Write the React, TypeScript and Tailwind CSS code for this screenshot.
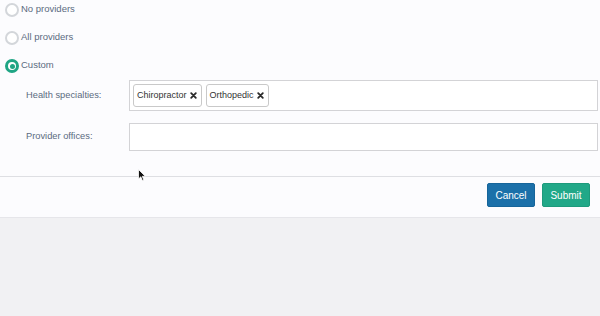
function Radio({ checked }: { checked?: boolean }) {
  return checked ? (
    <span className="w-[14px] h-[14px] rounded-full border-[3px] border-[#1fa584] flex items-center justify-center bg-white">
      <span className="w-[5px] h-[5px] rounded-full bg-[#1fa584]"></span>
    </span>
  ) : (
    <span className="w-[14px] h-[14px] rounded-full border-[2.5px] border-[#d3d6da] bg-white"></span>
  );
}

function Tag({ label }: { label: string }) {
  return (
    <span className="h-[23px] flex items-center gap-[3px] pl-[3px] pr-[4px] border border-[#c9c9c9] rounded-[3px] bg-white text-[#333] text-[9px]">
      {label}
      <svg width="7" height="7" viewBox="0 0 7 7">
        <path d="M1.2 1.2 L5.8 5.8 M5.8 1.2 L1.2 5.8" stroke="#2b2b2b" strokeWidth="1.8" strokeLinecap="round" />
      </svg>
    </span>
  );
}

export default function App() {
  const options = ["No providers", "All providers", "Custom"];
  return (
    <div className="w-[600px] h-[316px] bg-[#f1f1f3] relative overflow-hidden" style={{ fontFamily: '"Liberation Sans", Arial, sans-serif' }}>
      <div className="bg-[#fcfcfe]">
        <div className="flex flex-col gap-[8px] pl-[5px]">
          {options.map((o, i) => (
            <div key={o} className="h-[20px] flex items-center gap-[2px] text-[9.5px] text-[#5b6b7e]">
              <Radio checked={i === 2} />
              <span className="-mt-[2px]">{o}</span>
            </div>
          ))}
        </div>

        <div className="mt-[4px] flex items-center">
          <span className="w-[129px] pl-[26px] text-[9.3px] text-[#5b6b7e]">Health specialties:</span>
          <div className="w-[469px] h-[31px] border border-[#d3d3d6] bg-white flex items-center gap-[4px] px-[3px]">
            <Tag label="Chiropractor" />
            <Tag label="Orthopedic" />
          </div>
        </div>

        <div className="mt-[12px] flex items-center">
          <span className="w-[129px] pl-[26px] text-[9.3px] text-[#5b6b7e]">Provider offices:</span>
          <div className="w-[469px] h-[28px] border border-[#d3d3d6] bg-white"></div>
        </div>

        <div className="h-[25px]"></div>

        <div className="border-t border-[#dedfe3] border-b border-b-[#e6e6ea] h-[42px] flex justify-end items-start pt-[6px] pr-[10px] gap-[7px]">
          <button className="w-[48px] h-[24px] rounded-[2px] bg-[#1b70a9] border border-[#16659a] text-white text-[10px]">Cancel</button>
          <button className="w-[48px] h-[24px] rounded-[2px] bg-[#21a888] border border-[#1d9a7c] text-white text-[10px]">Submit</button>
        </div>
      </div>

      <svg className="absolute left-[138px] top-[169px]" width="8" height="13" viewBox="0 0 8 13">
        <path d="M0.5 0.5 L0.5 10 L2.8 7.8 L4.4 11.6 L5.8 11 L4.3 7.3 L7.3 7.3 Z" fill="#111" stroke="#fff" strokeWidth="0.8" />
      </svg>
    </div>
  );
}
